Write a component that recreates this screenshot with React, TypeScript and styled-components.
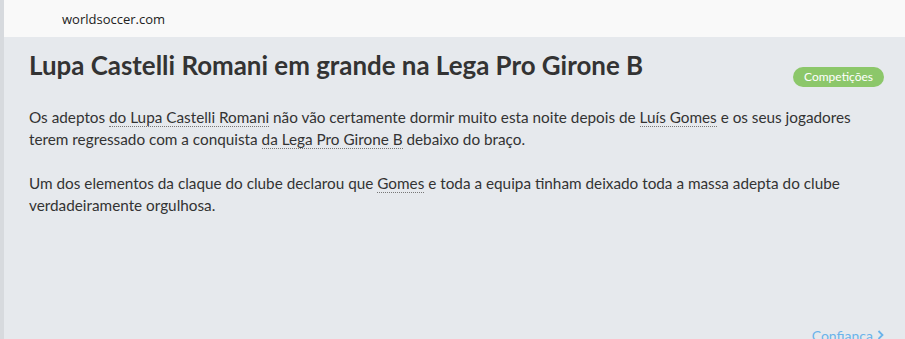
import React from 'react';
import styled, { createGlobalStyle } from 'styled-components';

const GlobalStyle = createGlobalStyle`
  html, body {
    margin: 0;
    padding: 0;
    background: #e6e9ed;
  }
  body {
    font-family: Lato, "Open Sans", sans-serif;
    color: #333;
  }
`;

const Page = styled.div`
  display: flex;
  flex-direction: column;
  min-height: 339px;
  border-left: 4px solid #d7dade;
  box-sizing: border-box;
`;

const TopBar = styled.div`
  height: 37px;
  display: flex;
  align-items: center;
  padding-left: 58px;
  background: #f9f9f9;
  font-family: "Open Sans", sans-serif;
  font-size: 13px;
  color: #222;
`;

const Content = styled.div`
  flex: 1;
  display: flex;
  flex-direction: column;
  padding: 12px 21px 0 25px;
`;

const Header = styled.div`
  display: flex;
  justify-content: space-between;
  align-items: flex-start;
`;

const Title = styled.h1`
  margin: 0;
  font-size: 25.9px;
  font-weight: 700;
  line-height: 32px;
  color: #333;
`;

const Badge = styled.span`
  margin-top: 18px;
  padding: 2px 11px;
  border-radius: 10px;
  background: #8cc76a;
  color: #fff;
  font-size: 12px;
  line-height: 16px;
`;

const Paragraph = styled.p`
  margin: 19px 0 0;
  font-size: 15.3px;
  line-height: 22px;
  color: #333;

  & + & {
    margin-top: 22px;
  }
`;

const Ref = styled.span`
  border-bottom: 1px dotted #777;
`;

const Footer = styled.div`
  margin-top: auto;
  display: flex;
  justify-content: flex-end;
  height: 10px;
  overflow: visible;
`;

const MoreLink = styled.a`
  display: flex;
  align-items: center;
  gap: 4px;
  font-size: 14px;
  color: #6ab3ea;
  text-decoration: none;
  transform: translateY(1px);
  margin-right: 0;
`;

const Chevron = () => (
  <svg width="7" height="10" viewBox="0 0 7 10" aria-hidden="true">
    <path d="M1.5 1 L5.5 5 L1.5 9" fill="none" stroke="currentColor" strokeWidth="1.8" />
  </svg>
);

export default function App() {
  return (
    <>
      <GlobalStyle />
      <Page>
        <TopBar>worldsoccer.com</TopBar>
        <Content>
          <Header>
            <Title>Lupa Castelli Romani em grande na Lega Pro Girone B</Title>
            <Badge>Competições</Badge>
          </Header>
          <Paragraph>
            Os adeptos <Ref>do Lupa Castelli Romani</Ref> não vão certamente dormir muito esta noite depois de{' '}
            <Ref>Luís Gomes</Ref> e os seus jogadores terem regressado com a conquista{' '}
            <Ref>da Lega Pro Girone B</Ref> debaixo do braço.
          </Paragraph>
          <Paragraph>
            Um dos elementos da claque do clube declarou que <Ref>Gomes</Ref> e toda a equipa tinham deixado toda a
            massa adepta do clube verdadeiramente orgulhosa.
          </Paragraph>
          <Footer>
            <MoreLink href="#">
              Confiança
              <Chevron />
            </MoreLink>
          </Footer>
        </Content>
      </Page>
    </>
  );
}
